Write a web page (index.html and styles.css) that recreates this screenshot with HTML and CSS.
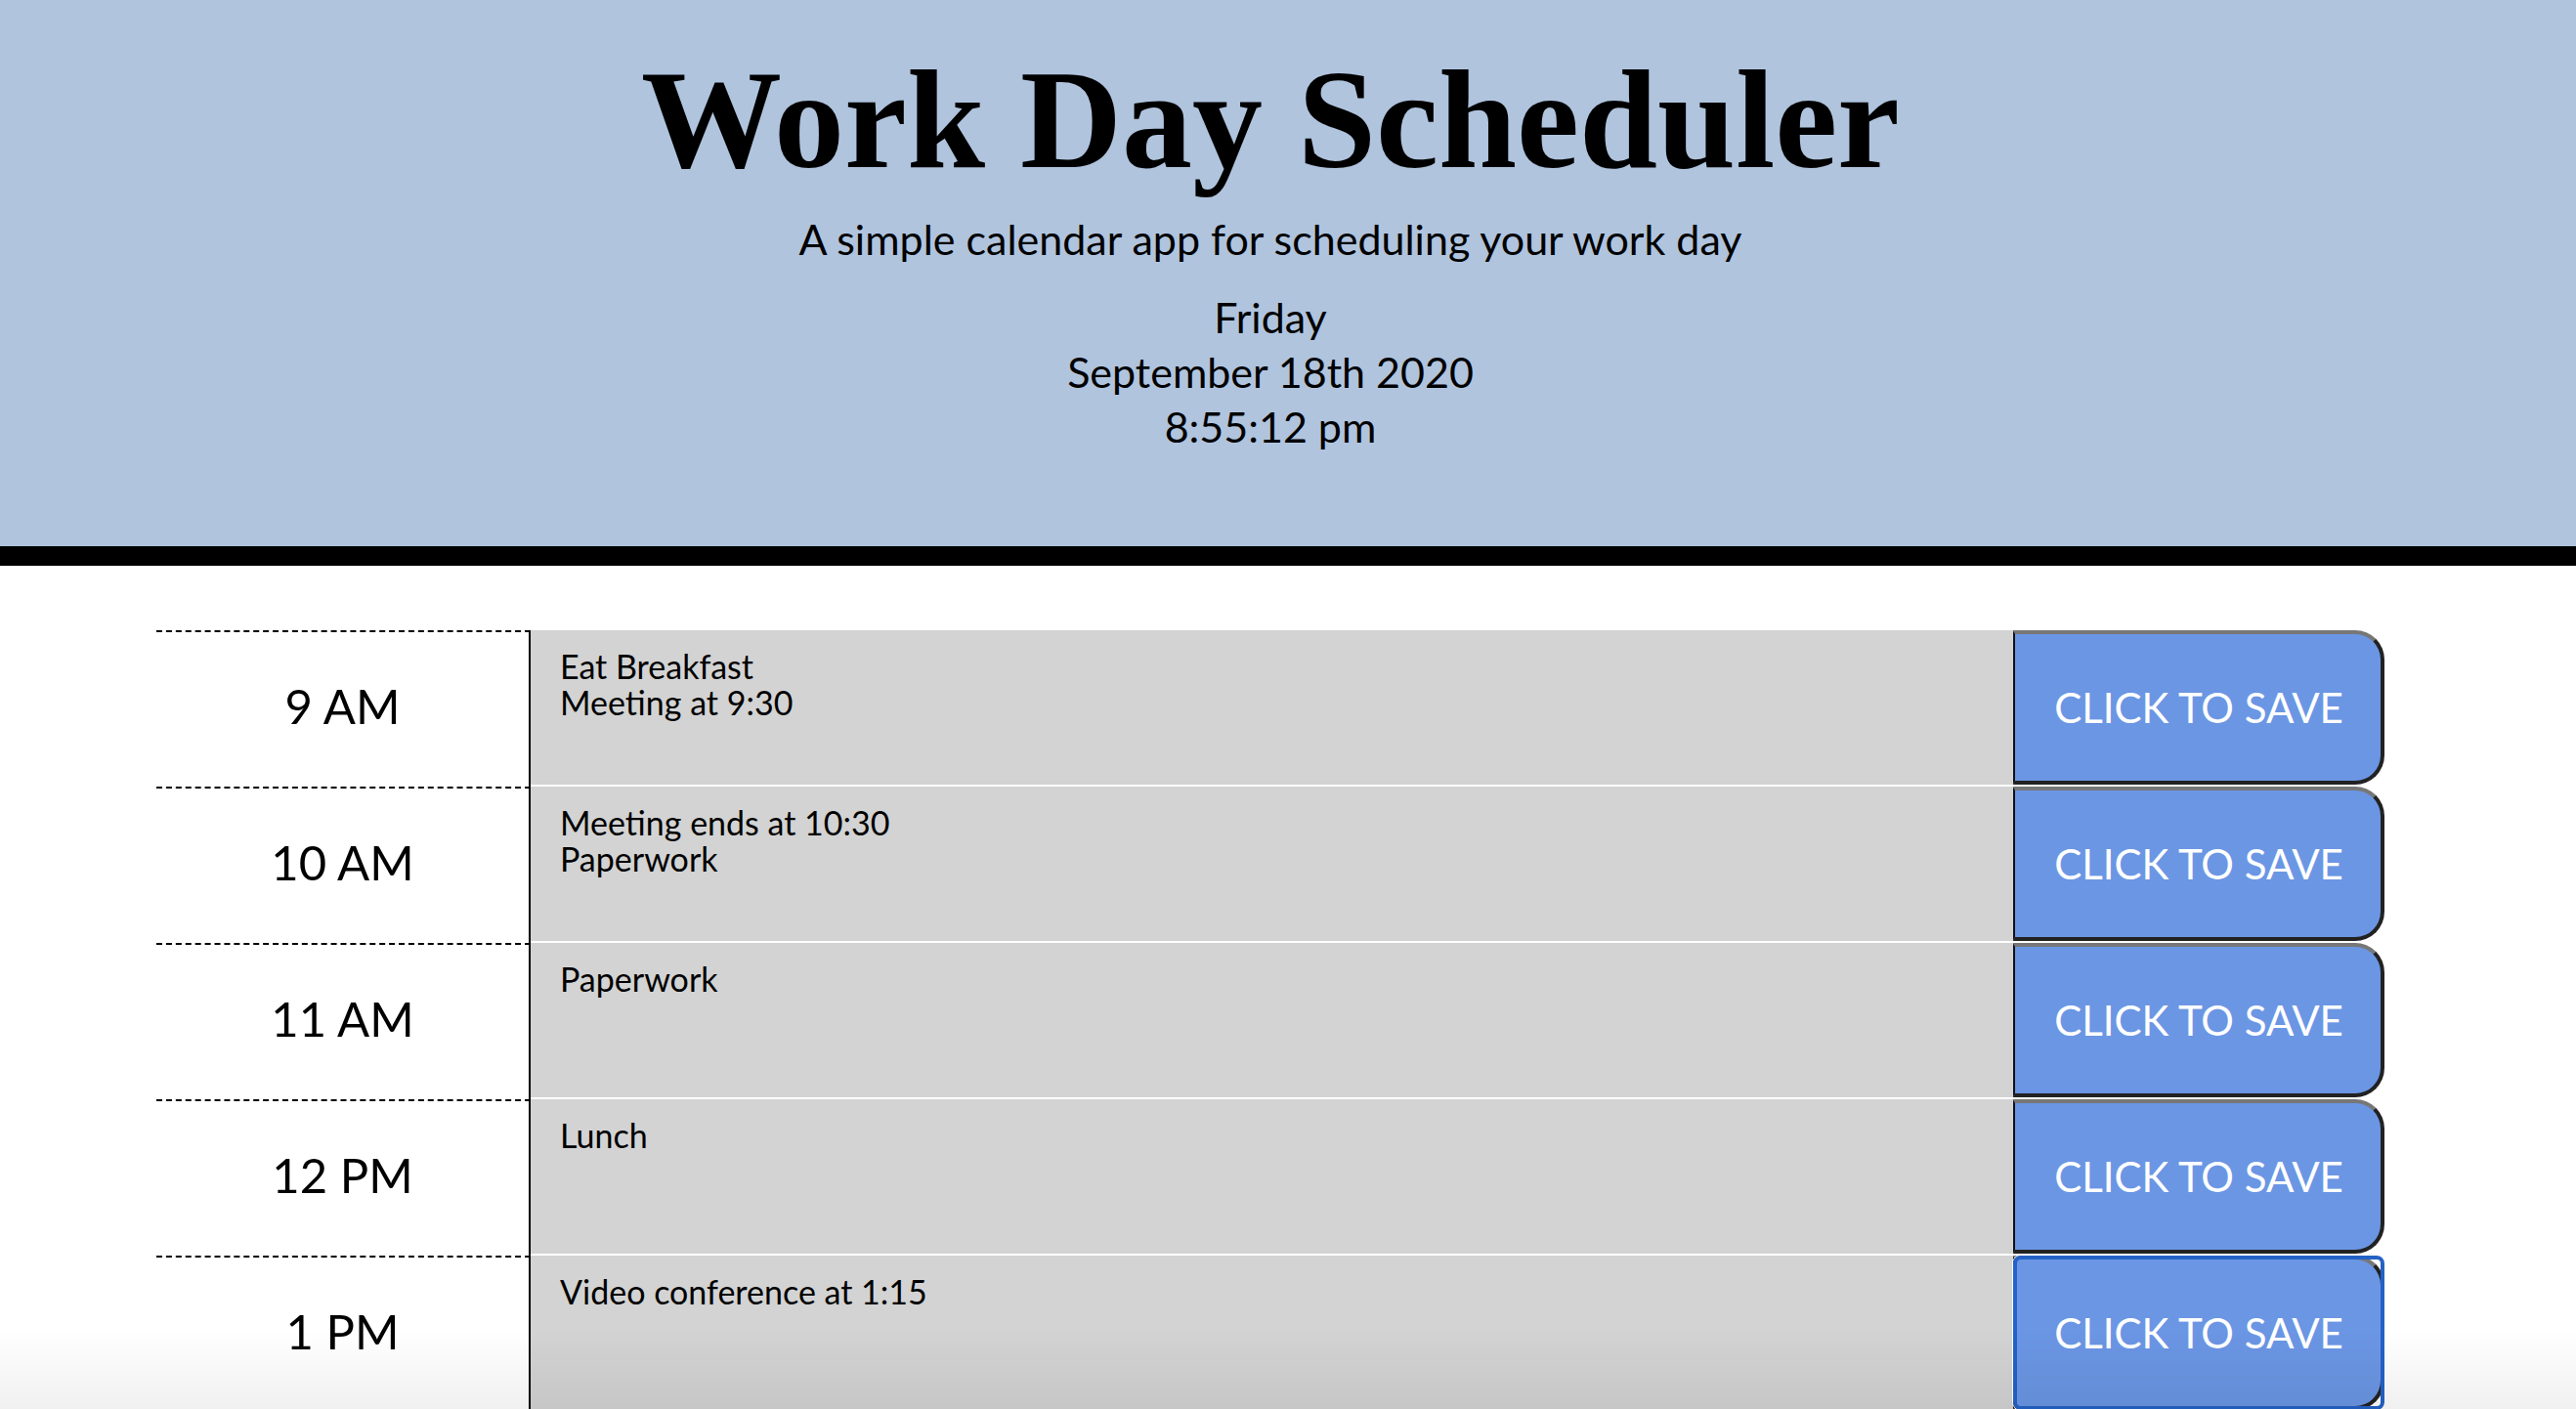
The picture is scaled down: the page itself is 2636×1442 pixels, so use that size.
FILE: index.html
```html
<!DOCTYPE html>
<html lang="en">
<head>
<meta charset="utf-8">
<title>Work Day Scheduler</title>
<link rel="stylesheet" href="styles.css">
</head>
<body>
<header class="jumbotron">
  <h1 class="title">Work Day Scheduler</h1>
  <p class="lead">A simple calendar app for scheduling your work day</p>
  <div class="today">
    <p class="today-line">Friday</p>
    <p class="today-line">September 18th 2020</p>
    <p class="today-line">8:55:12 pm</p>
  </div>
</header>
<main class="container">
  <div class="time-row">
    <div class="hour">9 AM</div>
    <textarea class="description">Eat Breakfast
Meeting at 9:30</textarea>
    <button class="save-btn">Click to save</button>
  </div>
  <div class="time-row">
    <div class="hour">10 AM</div>
    <textarea class="description">Meeting ends at 10:30
Paperwork</textarea>
    <button class="save-btn">Click to save</button>
  </div>
  <div class="time-row">
    <div class="hour">11 AM</div>
    <textarea class="description">Paperwork</textarea>
    <button class="save-btn">Click to save</button>
  </div>
  <div class="time-row">
    <div class="hour">12 PM</div>
    <textarea class="description">Lunch</textarea>
    <button class="save-btn">Click to save</button>
  </div>
  <div class="time-row">
    <div class="hour">1 PM</div>
    <textarea class="description">Video conference at 1:15</textarea>
    <button class="save-btn is-focused">Click to save</button>
  </div>
  <div class="time-row">
    <div class="hour">2 PM</div>
    <textarea class="description"></textarea>
    <button class="save-btn">Click to save</button>
  </div>
  <div class="time-row">
    <div class="hour">3 PM</div>
    <textarea class="description"></textarea>
    <button class="save-btn">Click to save</button>
  </div>
  <div class="time-row">
    <div class="hour">4 PM</div>
    <textarea class="description"></textarea>
    <button class="save-btn">Click to save</button>
  </div>
  <div class="time-row">
    <div class="hour">5 PM</div>
    <textarea class="description"></textarea>
    <button class="save-btn">Click to save</button>
  </div>
</main>
<div class="bottom-shade"></div>
</body>
</html>
```

FILE: styles.css
```css
* {
  box-sizing: border-box;
}

html, body {
  margin: 0;
  padding: 0;
  background: #ffffff;
}

body {
  font-family: "Lato", "Open Sans", sans-serif;
  color: #000;
  padding-bottom: 120px;
}

.jumbotron {
  background: #b0c4de;
  border-bottom: 20px solid #000;
  text-align: center;
  padding: 36px 36px 94px 0;
  margin-bottom: 66px;
}

.title {
  font-family: "Liberation Serif", "Times New Roman", serif;
  font-weight: 700;
  font-size: 144px;
  line-height: 173px;
  margin: 0;
}

.lead {
  font-size: 43px;
  line-height: 52px;
  margin: 10px 0 0;
}

.today {
  margin-top: 26px;
}

.today-line {
  font-size: 43px;
  line-height: 56px;
  margin: 0;
}

.container {
  margin-left: 160px;
  width: 2280px;
}

.time-row {
  display: grid;
  grid-template-columns: 383px 1fr 380px;
  height: 160px;
}

.hour {
  border-top: 2px dashed #000;
  border-right: 2px solid #000;
  display: flex;
  align-items: center;
  justify-content: center;
  font-size: 49px;
  padding-bottom: 8px;
}

.description {
  font-family: "Lato", "Open Sans", sans-serif;
  font-size: 34px;
  line-height: 37px;
  color: #000;
  background: #d3d3d3;
  border: none;
  border-bottom: 2px solid #fff;
  padding: 18px 30px 0;
  margin: 0;
  resize: none;
  outline: none;
  overflow: hidden;
  height: 160px;
}

.save-btn {
  position: relative;
  font-family: "Lato", "Open Sans", sans-serif;
  font-size: 42px;
  text-transform: uppercase;
  color: #fff;
  background: #6b96e4;
  border-top: 4px solid #777;
  border-left: 2px solid #111;
  border-right: 4px solid #222;
  border-bottom: 4px solid #222;
  border-radius: 0 30px 30px 0;
  height: 158px;
  margin: 0;
  padding: 0 0 0 2px;
  cursor: pointer;
}

.save-btn.is-focused::after {
  content: "";
  position: absolute;
  top: -4px;
  left: -2px;
  right: -4px;
  bottom: -4px;
  border: 4px solid #2462c6;
  border-radius: 8px;
  box-shadow: 0 0 0 1px #fff;
  pointer-events: none;
}

.bottom-shade {
  position: fixed;
  left: 0;
  right: 0;
  bottom: 0;
  height: 80px;
  background: linear-gradient(to bottom, rgba(0, 0, 0, 0), rgba(0, 0, 0, 0.06));
  pointer-events: none;
}
```
